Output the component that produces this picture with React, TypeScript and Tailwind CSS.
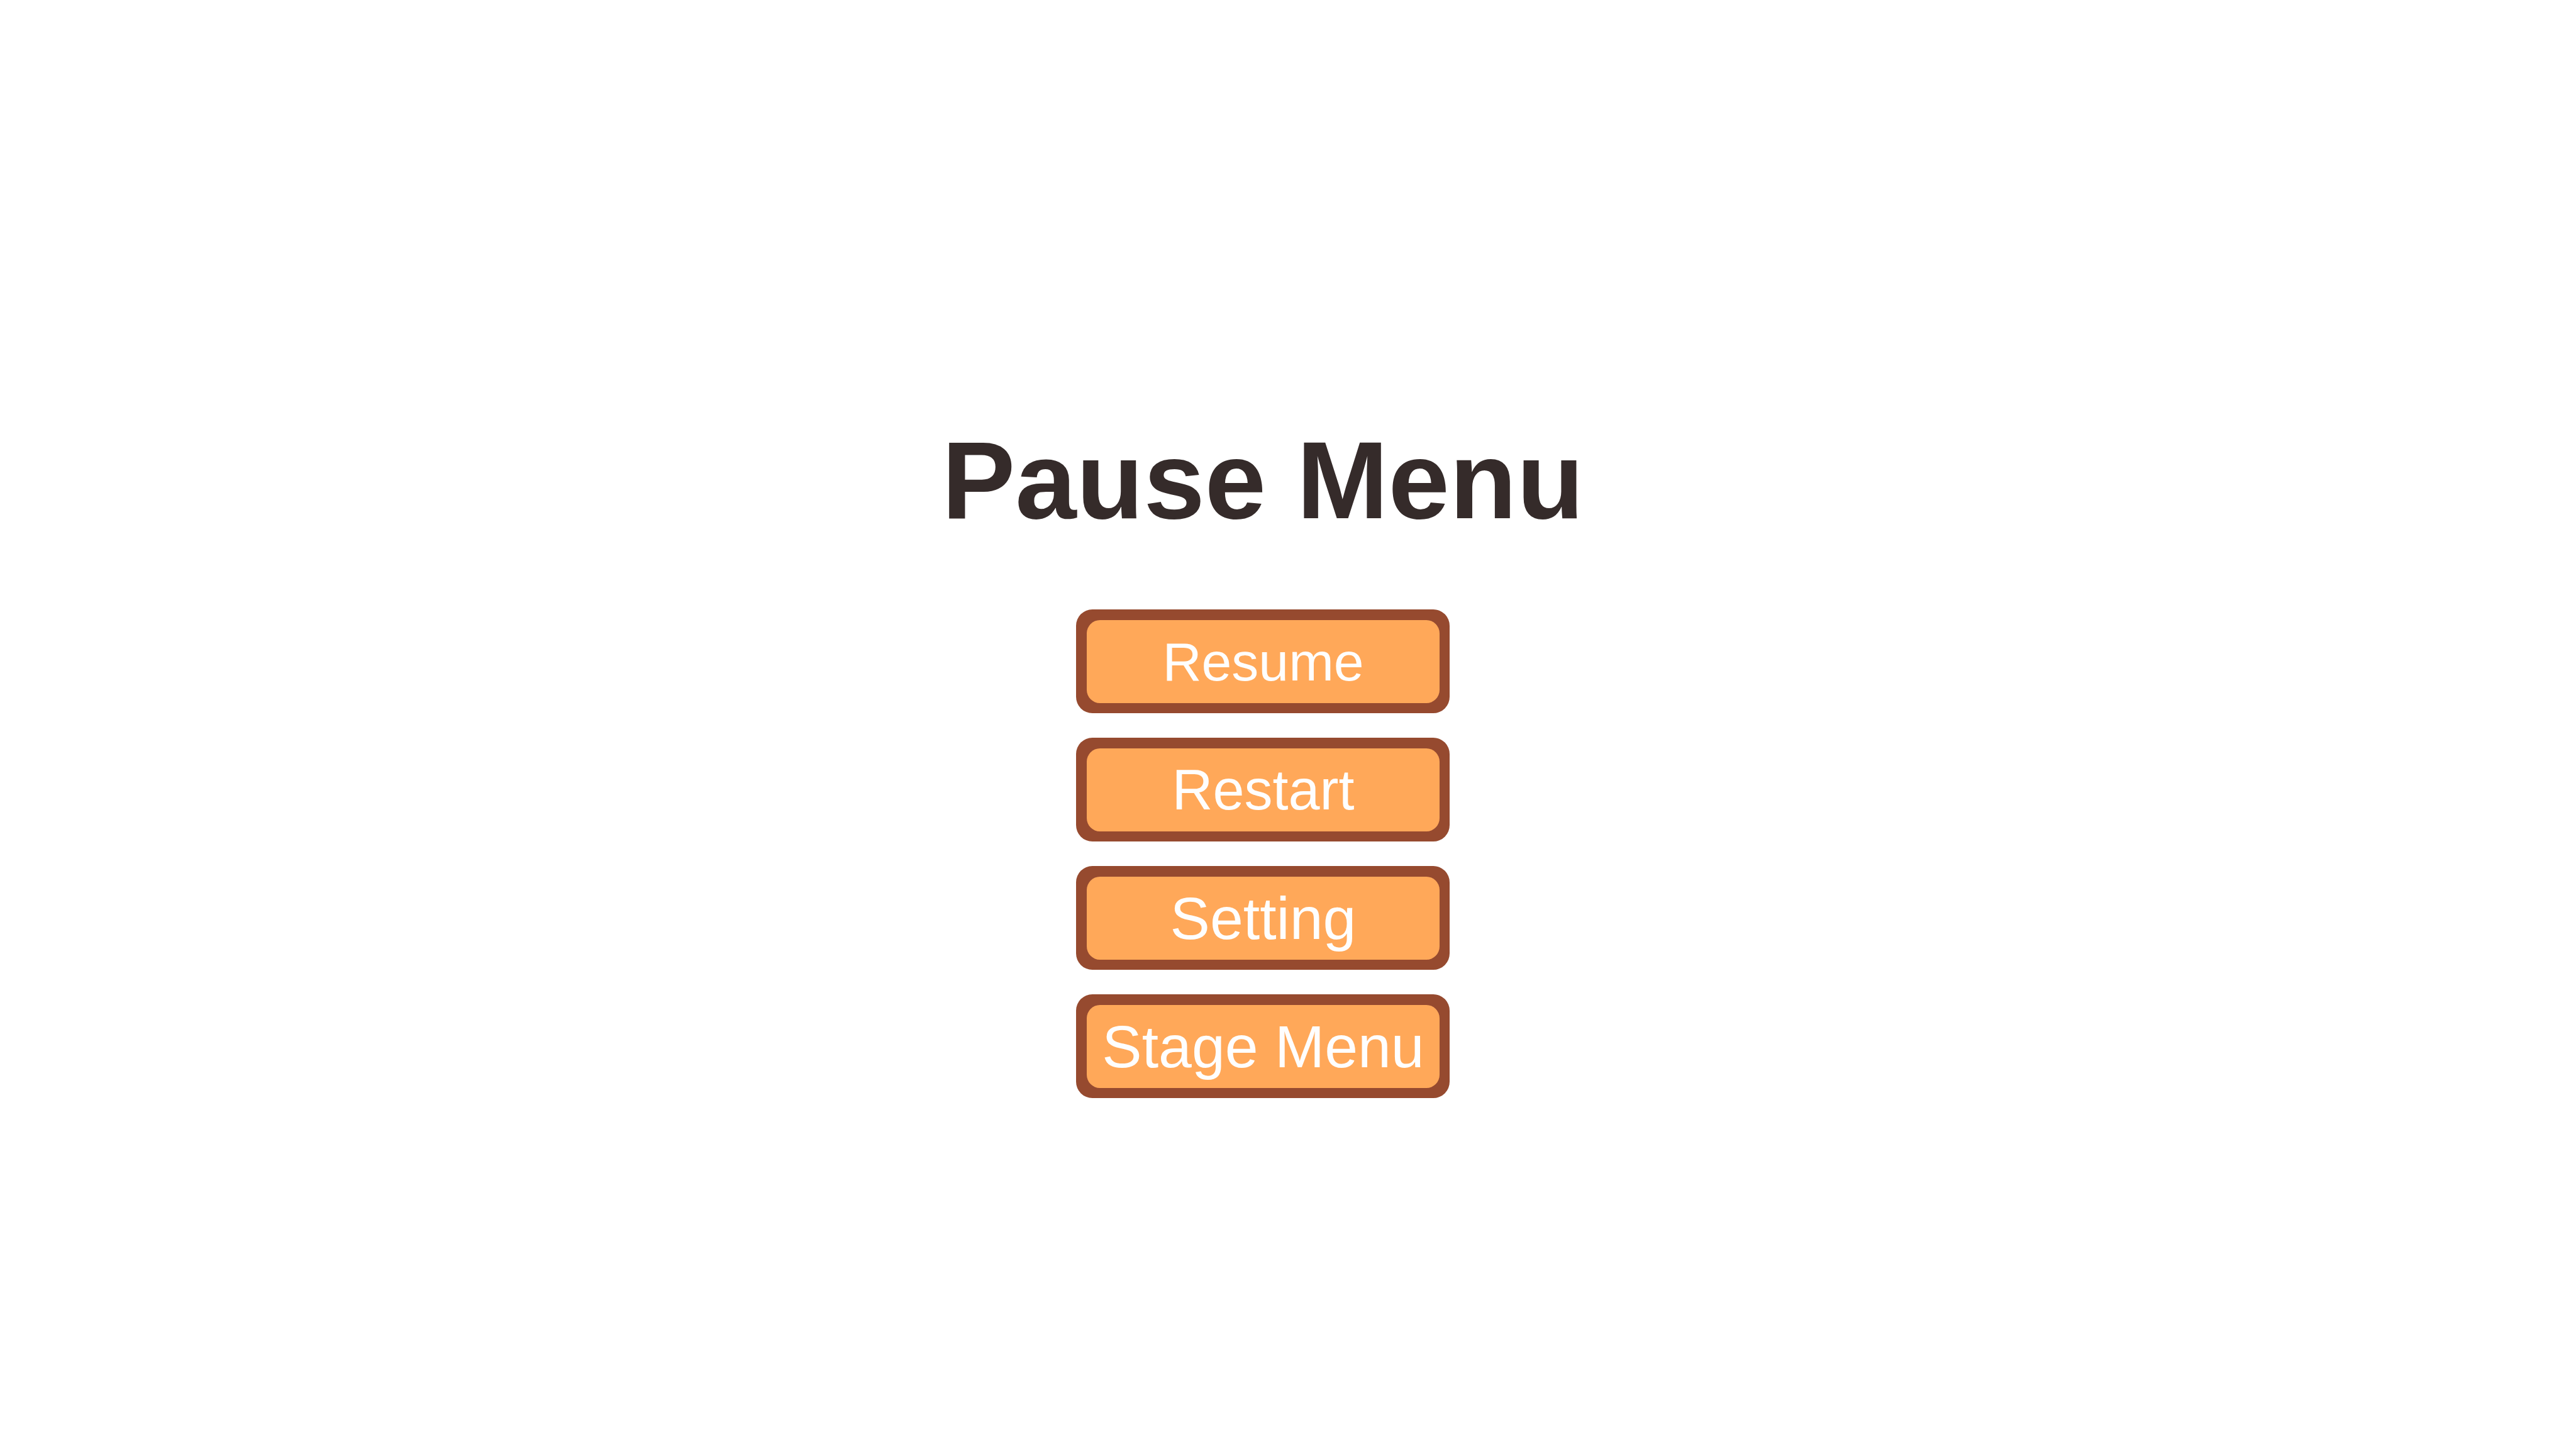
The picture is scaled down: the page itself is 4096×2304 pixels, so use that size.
const items = [
  { label: "Resume", size: "text-[86px]" },
  { label: "Restart", size: "text-[90px]" },
  { label: "Setting", size: "text-[95px]" },
  { label: "Stage Menu", size: "text-[95px]" },
];

function MenuButton({ label, size }: { label: string; size: string }) {
  return (
    <button
      type="button"
      className="flex w-full cursor-pointer rounded-[26px] bg-[#964a2f] pt-[17px] pr-4 pb-4 pl-[17px]"
    >
      <span
        className={`flex-1 rounded-[21px] bg-[#ffa859] text-center leading-[132px] whitespace-nowrap text-[#fefefe] ${size}`}
      >
        {label}
      </span>
    </button>
  );
}

export default function App() {
  return (
    <main className="flex min-h-screen flex-col items-center justify-center bg-white pt-[106px] pr-20 font-['Liberation_Sans',Arial,sans-serif]">
      <h1 className="mb-[105px] text-center text-[175px] leading-[200px] font-bold text-[#352b2a]">
        Pause Menu
      </h1>
      <nav aria-label="Pause Menu" className="w-[594px] max-w-full">
        <ul className="flex flex-col gap-[39px]">
          {items.map((item) => (
            <li key={item.label}>
              <MenuButton label={item.label} size={item.size} />
            </li>
          ))}
        </ul>
      </nav>
    </main>
  );
}
